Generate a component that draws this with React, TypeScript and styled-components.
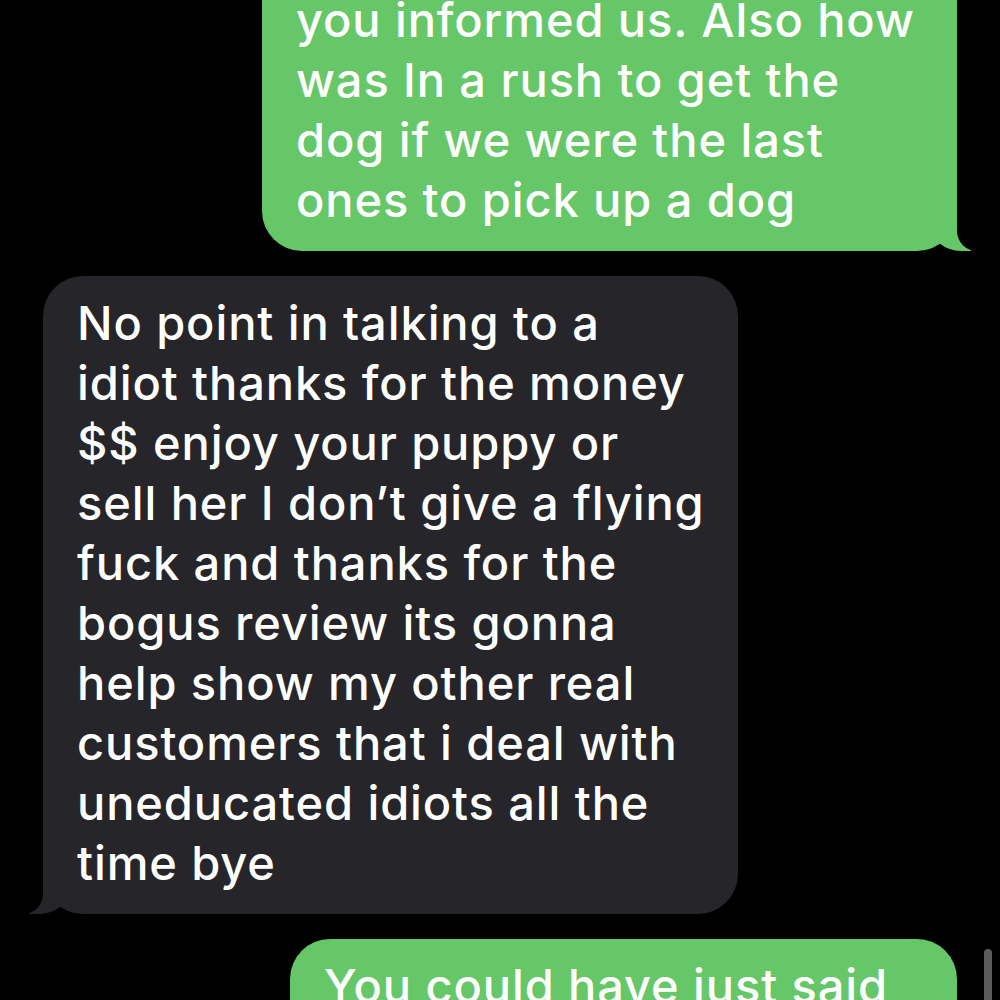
import React from 'react';
import styled, { createGlobalStyle, css } from 'styled-components';

const GlobalStyle = createGlobalStyle`
  html, body {
    margin: 0;
    padding: 0;
    background: #000;
  }
`;

const GREEN = '#66c768';
const GRAY = '#262529';

const Screen = styled.div`
  position: relative;
  width: 1000px;
  height: 1000px;
  overflow: hidden;
  background: #000;
  font-family: Inter, 'Noto Sans', sans-serif;
`;

const Thread = styled.div`
  display: flex;
  flex-direction: column;
  gap: 25px;
  padding: 0 43px;
  margin-top: -27px;
`;

const Bubble = styled.div<{ $sent?: boolean; $width: number; $cutTop?: boolean }>`
  position: relative;
  isolation: isolate;
  box-sizing: border-box;
  width: ${(p) => p.$width}px;
  align-self: ${(p) => (p.$sent ? 'flex-end' : 'flex-start')};
  padding: 17px 24px 21px 34px;
  border-radius: 40px;
  background: ${(p) => (p.$sent ? GREEN : GRAY)};
  color: #fff;
  font-size: 47px;
  font-weight: 500;
  line-height: 60px;
  letter-spacing: 0.9px;
  white-space: pre-line;

  ${(p) =>
    p.$cutTop &&
    css`
      border-top-left-radius: 0;
      border-top-right-radius: 0;
    `}

  &::before,
  &::after {
    content: '';
    position: absolute;
    bottom: 0;
    z-index: -1;
  }

  ${(p) =>
    p.$sent
      ? css`
          &::before {
            right: -14px;
            width: 40px;
            height: 40px;
            background: ${GREEN};
            border-bottom-left-radius: 30px 26px;
          }
          &::after {
            right: -50px;
            width: 50px;
            height: 40px;
            background: #000;
            border-bottom-left-radius: 20px;
          }
        `
      : css`
          &::before {
            left: -14px;
            width: 40px;
            height: 40px;
            background: ${GRAY};
            border-bottom-right-radius: 30px 26px;
          }
          &::after {
            left: -50px;
            width: 50px;
            height: 40px;
            background: #000;
            border-bottom-right-radius: 20px;
          }
        `}
`;

const ScrollThumb = styled.div`
  position: absolute;
  top: 949px;
  right: 8px;
  width: 8px;
  height: 90px;
  border-radius: 4px;
  background: #5b5b5d;
`;

const messages = [
  {
    sent: true,
    width: 695,
    cutTop: true,
    text: 'you informed us. Also how\nwas In a rush to get the\ndog if we were the last\nones to pick up a dog',
  },
  {
    sent: false,
    width: 695,
    text:
      'No point in talking to a\nidiot thanks for the money\n$$ enjoy your puppy or\nsell her I don\u2019t give a flying\nfuck and thanks for the\nbogus review its gonna\nhelp show my other real\ncustomers that i deal with\nuneducated idiots all the\ntime bye',
  },
  {
    sent: true,
    width: 667,
    text: 'You could have just said',
  },
];

const App = () => (
  <Screen>
    <GlobalStyle />
    <Thread>
      {messages.map((m, i) => (
        <Bubble key={i} $sent={m.sent} $width={m.width} $cutTop={m.cutTop}>
          {m.text}
        </Bubble>
      ))}
    </Thread>
    <ScrollThumb />
  </Screen>
);

export default App;
